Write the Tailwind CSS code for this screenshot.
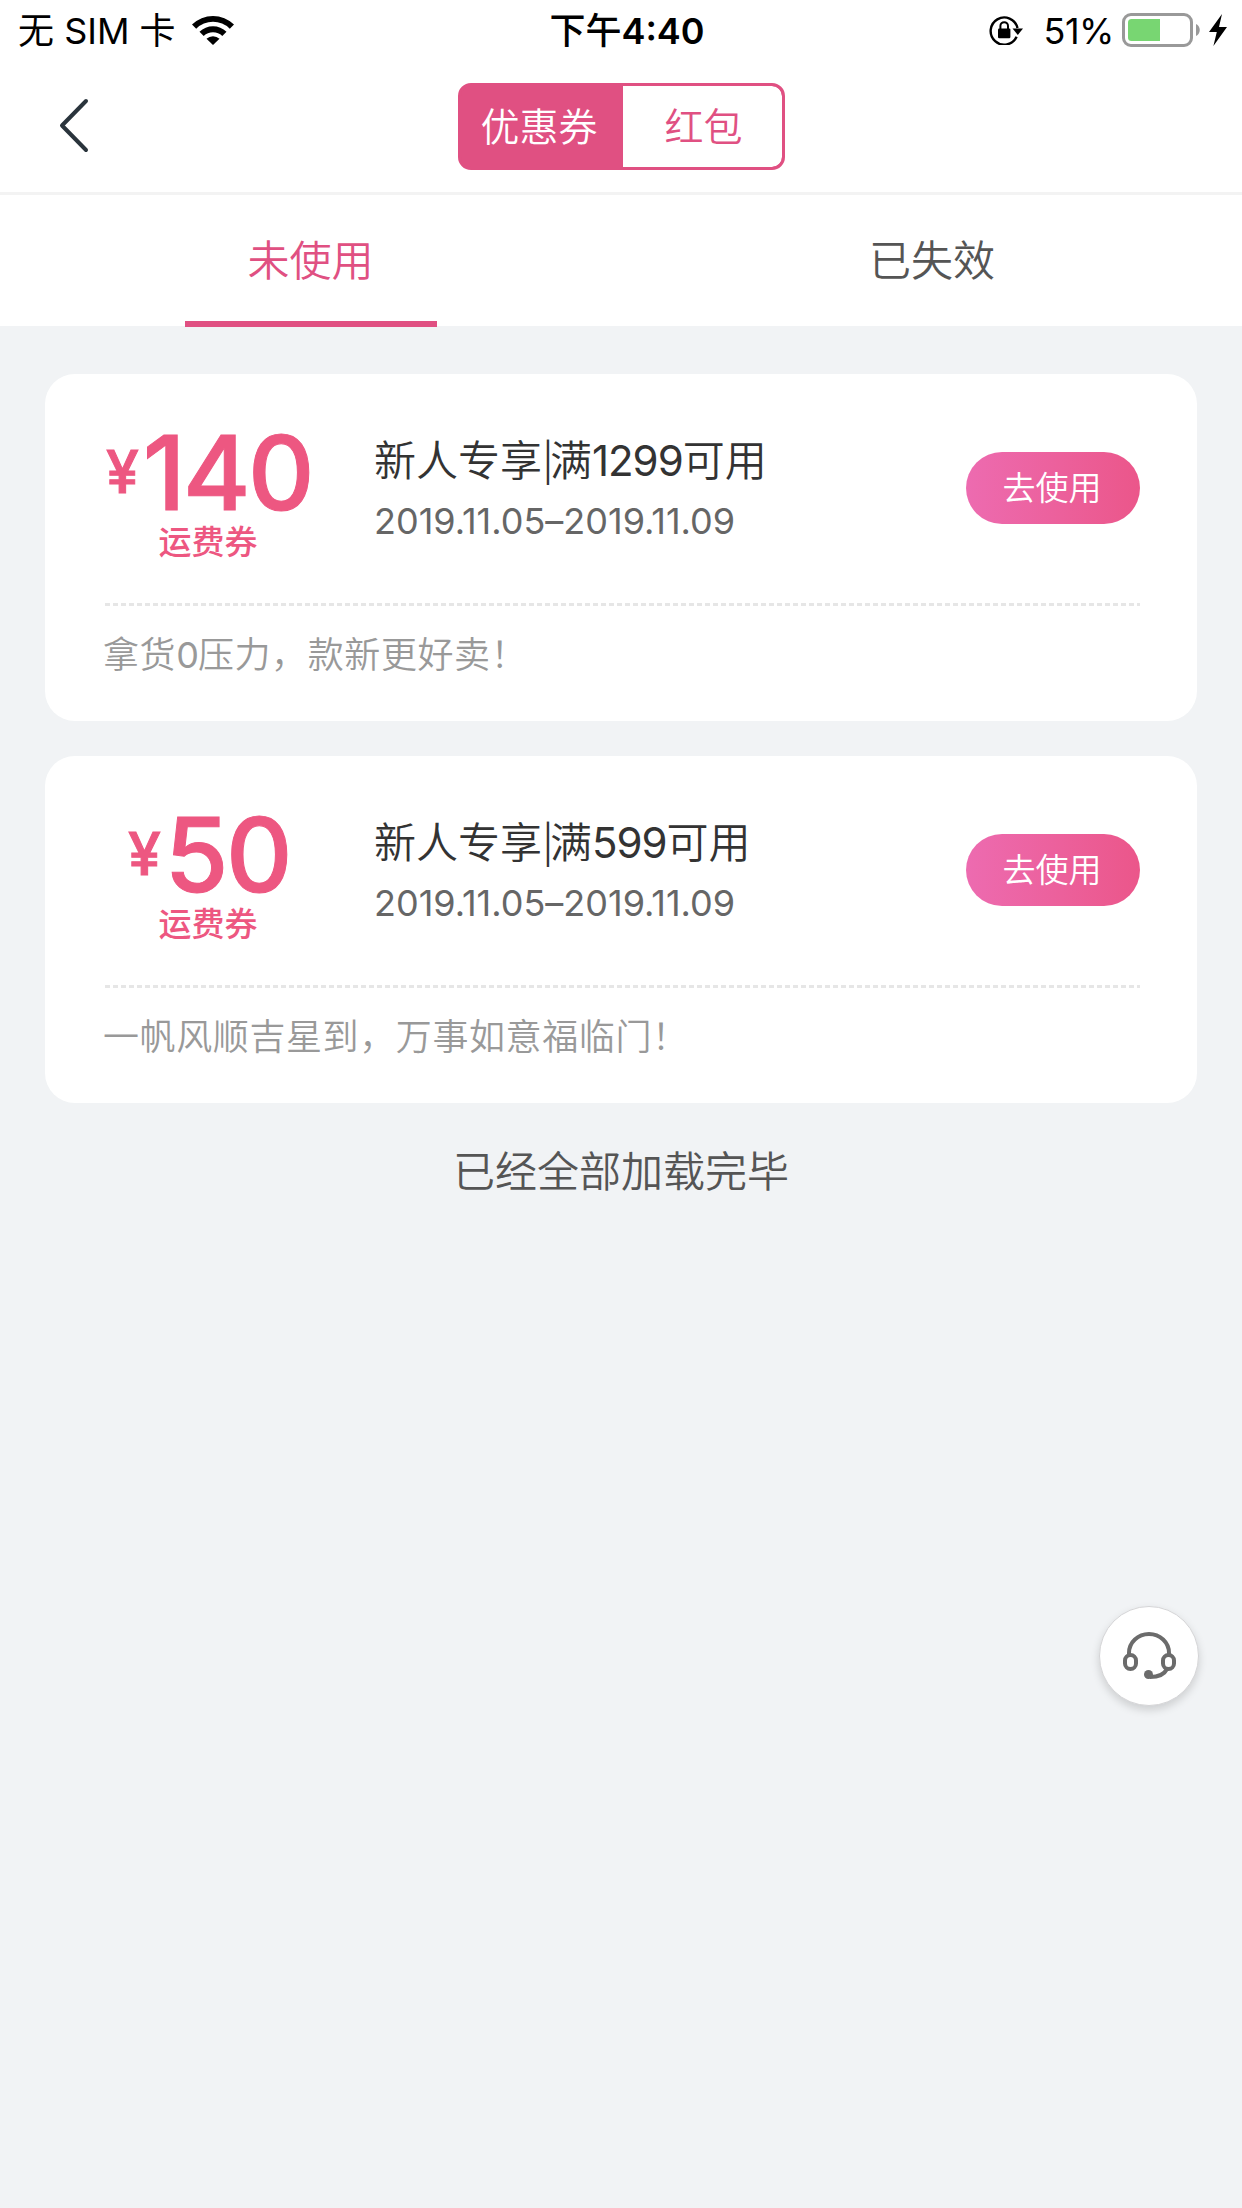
<!DOCTYPE html>
<html lang="zh-CN">
<head>
  <meta charset="UTF-8" />
  <title>优惠券</title>
  <script src="https://cdn.jsdelivr.net/npm/@tailwindcss/browser@4"></script>
</head>
<body class="bg-[#f1f3f5] font-['Inter','Noto_Sans_CJK_SC',sans-serif] font-[350] w-[1242px] h-[2208px] overflow-hidden">

  <!-- Status bar -->
  <div class="h-[60px] bg-white flex items-center justify-between pl-[18px] pr-[15px] text-black text-[36px] leading-[60px]">
    <div class="flex items-center w-[400px]">
      <span class="whitespace-pre pt-[2px] font-normal">无 SIM 卡</span>
      <svg class="ml-[16px] w-[42px] h-[30px]" viewBox="0 0 42 30">
        <path d="M0 9.5a30 30 0 0 1 42 0l-4.2 4.2a24 24 0 0 0-33.6 0z" />
        <path d="M7.5 16.8a19.3 19.3 0 0 1 27 0l-4.2 4.1a13.4 13.4 0 0 0-18.6 0z" />
        <path d="M14.5 23.8a9.4 9.4 0 0 1 13 0L21 30z" />
      </svg>
    </div>
    <span class="font-semibold pt-[2px] pl-[9px]"><span class="font-medium">下午</span>4:40</span>
    <div class="flex items-center justify-end w-[400px]">
      <!-- Rotation lock -->
      <svg class="w-[34px] h-[30px] mr-[21px]" viewBox="0 0 34 30">
        <path d="M27.6 21.8A13.6 13.6 0 1 1 28.5 13" fill="none" stroke="#000" stroke-width="2.4" />
        <path d="M23.5 13.5h10.5L28.8 20z" />
        <rect x="9" y="13.5" width="12.4" height="9.8" rx="1.2" />
        <path d="M11.4 14v-3a3.8 3.8 0 0 1 7.6 0v3" fill="none" stroke="#000" stroke-width="2" />
      </svg>
      <span class="tracking-[-0.5px] pt-[2px] font-normal">51%</span>
      <svg class="ml-[8px] w-[78px] h-[34px]" viewBox="0 0 78 34">
        <rect x="1.5" y="1.5" width="68" height="31" rx="7.5" fill="none" stroke="#999" stroke-width="3" />
        <path d="M38 6H9.5A3.5 3.5 0 0 0 6 9.5v15A3.5 3.5 0 0 0 9.5 28H38z" fill="#78d672" />
        <path d="M74 11c5 2 5 10 0 12z" fill="#999" />
      </svg>
      <svg class="ml-[9px] w-[18px] h-[32px]" viewBox="0 0 18 32">
        <path d="M13 0L0 18h7.8L4.4 32 18 13h-8z" />
      </svg>
    </div>
  </div>

  <!-- Nav bar -->
  <div class="h-[135px] bg-white border-b-3 border-[#f3f3f3] grid grid-cols-[1fr_327px_1fr] pt-[23px]">
    <svg class="ml-[59px] mt-[15px] w-[31px] h-[55px]" viewBox="0 0 31 55" fill="none" stroke="#2a343c" stroke-width="4" stroke-linecap="round" stroke-linejoin="round">
      <path d="M27 3L3 27.5L27 52" />
    </svg>
    <div class="h-[87px] flex border-3 border-[#e05082] bg-[#e05082] rounded-[13px] overflow-hidden text-[39px] leading-[82px] text-center">
      <div class="w-[162px] pr-[5px] text-white">优惠券</div>
      <div class="flex-1 h-[81px] pl-[3px] bg-white rounded-r-[10px] text-[#e05082]">红包</div>
    </div>
  </div>

  <!-- Tabs -->
  <div class="h-[131px] bg-white grid grid-cols-2 text-[42px] leading-[120px] text-center">
    <div class="flex justify-center">
      <span class="w-[252px] h-[132px] pt-[6px] border-b-6 border-[#e05082] text-[#e05082]">未使用</span>
    </div>
    <div class="pt-[6px] pl-px text-[#555]">已失效</div>
  </div>

  <!-- Coupons -->
  <div class="px-[45px] pt-[48px] flex flex-col gap-[35px]">
    <div class="h-[347px] bg-white rounded-[30px] px-[57px]">
      <div class="h-[229px] flex pt-[51px]">
        <div class="w-[212px] text-[#ed5781] text-center font-medium">
          <div class="h-[94px] pl-[2px] flex justify-center [-webkit-text-stroke:1px_#ed5781]">
            <span class="text-[59px] leading-[94px] mr-[4px]">¥</span>
            <span class="text-[103px] leading-[95px] tracking-[-2.5px]">140</span>
          </div>
          <div class="text-[33px] leading-[46px]">运费券</div>
        </div>
        <div class="flex-1 pl-[60px]">
          <div class="pt-[2px] text-[42px] leading-[68px] text-[#333]">新人专享<span class="text-[38px] tracking-[-4px]">|</span>满<span class="font-normal tracking-[-1px]">1299</span>可用</div>
          <div class="text-[36px] leading-[51px] text-[#666] font-normal [font-feature-settings:'calt'_0]">2019.11.05–2019.11.09</div>
        </div>
        <div class="w-[174px] h-[72px] pr-[2px] mt-[27px] rounded-full bg-linear-to-r from-[#ed6bb0] to-[#eb568a] text-white text-[33px] leading-[73px] text-center">去使用</div>
      </div>
      <div class="h-[3px] ml-[3px] bg-[repeating-linear-gradient(90deg,#e6e6e6_0_5px,transparent_5px_8px)]"></div>
      <div class="pl-px text-[36px] leading-[98px] tracking-[0.6px] text-[#999]">拿货<span class="font-normal tracking-[-1px]">0</span>压力，款新更好卖！</div>
    </div>

    <div class="h-[347px] bg-white rounded-[30px] px-[57px]">
      <div class="h-[229px] flex pt-[51px]">
        <div class="w-[212px] text-[#ed5781] text-center font-medium">
          <div class="h-[94px] pl-[2px] flex justify-center [-webkit-text-stroke:1px_#ed5781]">
            <span class="text-[59px] leading-[94px] mr-[4px]">¥</span>
            <span class="text-[103px] leading-[95px] tracking-[-2.5px]">50</span>
          </div>
          <div class="text-[33px] leading-[46px]">运费券</div>
        </div>
        <div class="flex-1 pl-[60px]">
          <div class="pt-[2px] text-[42px] leading-[68px] text-[#333]">新人专享<span class="text-[38px] tracking-[-4px]">|</span>满<span class="font-normal tracking-[-1px]">599</span>可用</div>
          <div class="text-[36px] leading-[51px] text-[#666] font-normal [font-feature-settings:'calt'_0]">2019.11.05–2019.11.09</div>
        </div>
        <div class="w-[174px] h-[72px] pr-[2px] mt-[27px] rounded-full bg-linear-to-r from-[#ed6bb0] to-[#eb568a] text-white text-[33px] leading-[73px] text-center">去使用</div>
      </div>
      <div class="h-[3px] ml-[3px] bg-[repeating-linear-gradient(90deg,#e6e6e6_0_5px,transparent_5px_8px)]"></div>
      <div class="pl-px text-[36px] leading-[98px] tracking-[0.6px] text-[#999]">一帆风顺吉星到，万事如意福临门！</div>
    </div>
  </div>

  <div class="mt-[37px] text-center text-[42px] leading-[64px] text-[#555]">已经全部加载完毕</div>

  <!-- Customer service button, floats over the list -->
  <div class="fixed left-[1099px] top-[1606px] w-[100px] h-[100px] rounded-full bg-white border border-[#d4d4d6] shadow-[0_4px_8px_rgba(0,0,0,0.15)]">
    <svg class="w-[98px] h-[98px]" viewBox="0 0 98 98" fill="none" stroke="#6b6b6b" stroke-width="4">
      <path d="M29 47v-1a20 19 0 0 1 40 0v1" />
      <rect x="25" y="48" width="11" height="14" rx="5.5" />
      <rect x="63" y="48" width="11" height="14" rx="5.5" />
      <path d="M67 62c-3 6-9 8-17 8" />
      <circle cx="48.5" cy="67.5" r="4.5" fill="#6b6b6b" stroke="none" />
    </svg>
  </div>

</body>
</html>
